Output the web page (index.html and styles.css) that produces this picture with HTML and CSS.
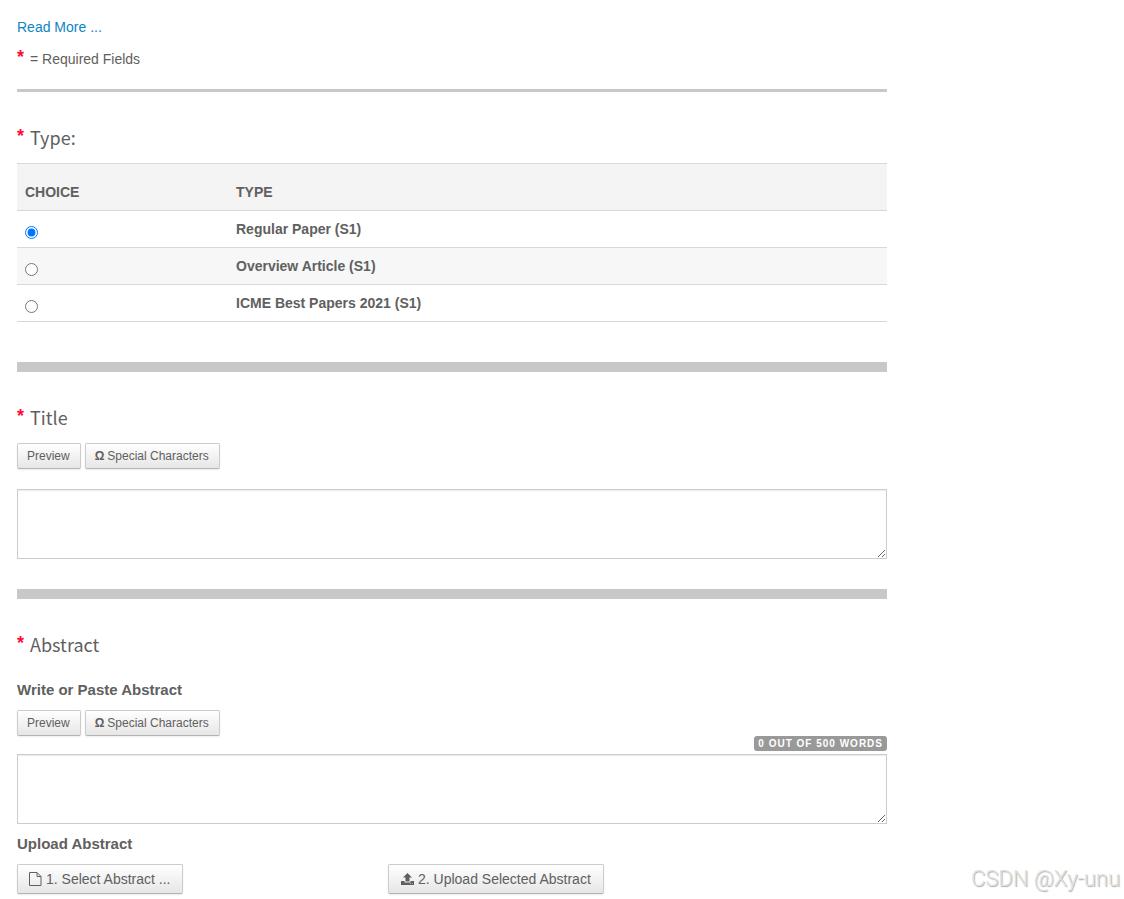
FILE: index.html
```html
<!DOCTYPE html>
<html lang="en">
<head>
<meta charset="utf-8">
<title>Type, Title, and Abstract</title>
<link rel="stylesheet" href="styles.css">
</head>
<body>
<main class="page">
  <form class="form">
    <div class="intro"><a href="#more">Read More ...</a></div>
    <div class="required"><span class="star">*</span><span>= Required Fields</span></div>
    <hr class="rule rule-thin">

    <section class="section">
      <h2 class="heading" id="type-heading"><span class="star">*</span><span>Type:</span></h2>
      <table class="choices" aria-labelledby="type-heading">
        <thead>
          <tr><th class="col-choice" scope="col">CHOICE</th><th scope="col">TYPE</th></tr>
        </thead>
        <tbody>
          <tr><td><input class="radio" type="radio" name="type" id="type-regular" checked></td><td><label for="type-regular">Regular Paper (S1)</label></td></tr>
          <tr><td><input class="radio" type="radio" name="type" id="type-overview"></td><td><label for="type-overview">Overview Article (S1)</label></td></tr>
          <tr><td><input class="radio" type="radio" name="type" id="type-icme"></td><td><label for="type-icme">ICME Best Papers 2021 (S1)</label></td></tr>
        </tbody>
      </table>
    </section>
    <hr class="rule rule-after-table">

    <section class="section">
      <h2 class="heading"><span class="star">*</span><label for="title">Title</label></h2>
      <div class="toolbar">
        <button class="btn btn-small" type="button">Preview</button>
        <button class="btn btn-small" type="button"><b>Ω</b> Special Characters</button>
      </div>
      <textarea class="area area-title" id="title"></textarea>
    </section>
    <hr class="rule">

    <section class="section">
      <h2 class="heading heading-abstract"><span class="star">*</span><span>Abstract</span></h2>
      <h3 class="subheading"><label for="abstract">Write or Paste Abstract</label></h3>
      <div class="toolbar">
        <button class="btn btn-small" type="button">Preview</button>
        <button class="btn btn-small" type="button"><b>Ω</b> Special Characters</button>
      </div>
      <div class="counter"><span class="badge">0 OUT OF 500 WORDS</span></div>
      <textarea class="area" id="abstract"></textarea>
      <h3 class="subheading subheading-upload">Upload Abstract</h3>
      <div class="uploads">
        <div>
          <button class="btn btn-select" type="button">
            <svg class="icon" width="13" height="14" viewBox="0 0 13 14" aria-hidden="true"><path d="M.5 .5h7.500l4 4v9H.5V.5zM8 .5v4h4" fill="none" stroke="currentColor"/></svg>
            <span>1. Select Abstract ...</span>
          </button>
        </div>
        <div>
          <button class="btn" type="button">
            <svg class="icon" width="13" height="14" viewBox="0 0 13 14" aria-hidden="true"><path d="M6.500 1 11 5.500H8.500V9.500h-4v-4H2zM0 9h3.500v1.500h6V9H13v4H0z" fill="currentColor"/><path d="M9 11.500h1M11 11.500h1" stroke="#aaa"/></svg>
            <span>2. Upload Selected Abstract</span>
          </button>
        </div>
      </div>
    </section>
  </form>
  <div class="watermark">CSDN @Xy-unu</div>
</main>
</body>
</html>
```
FILE: styles.css
```css
* {
  box-sizing: border-box;
}

body {
  margin: 0;
  background: #fff;
  color: #606060;
  font: 14px/20px "Liberation Sans", Arial, sans-serif;
}

.page {
  display: flex;
  justify-content: space-between;
  align-items: flex-end;
  padding: 17px 4px 5px 17px;
}

.form {
  flex: 0 1 870px;
  min-width: 0;
}

a {
  color: #0e84c0;
  text-decoration: none;
}

.required {
  display: flex;
  gap: 6px;
  margin-top: 12px;
}

.star {
  width: 7px;
  color: #ff0a32;
  font: bold 18px/16px "Liberation Sans", Arial, sans-serif;
}

.rule {
  height: 10px;
  margin: 30px 0 0;
  border: 0;
  background: #c8c8c8;
}

.rule-thin {
  height: 3px;
  margin-top: 20px;
}

.rule-after-table {
  margin-top: 40px;
}

.section {
  padding-top: 36px;
}

.heading {
  display: flex;
  gap: 6px;
  margin: 0 0 17px;
  font: normal 18px/18px "Noto Sans CJK SC", "Open Sans", sans-serif;
}

.heading-abstract {
  margin-bottom: 27px;
}

.subheading {
  margin: 0 0 10px;
  font-size: 15px;
  line-height: 20px;
}

.subheading-upload {
  margin-top: 10px;
}

.choices {
  width: 100%;
  border-collapse: collapse;
  font-weight: bold;
}

.choices th,
.choices td {
  padding: 8px;
  border-top: 1px solid #d8d8d8;
  border-bottom: 1px solid #d8d8d8;
  text-align: left;
  vertical-align: top;
}

.choices th {
  padding-top: 18px;
  background: #f4f4f4;
}

.choices tbody tr:nth-child(even) {
  background: #f7f7f7;
}

.col-choice {
  width: 211px;
}

.radio {
  display: block;
  width: 13px;
  height: 13px;
  margin: 7px 0 0;
}

.toolbar {
  display: flex;
  gap: 4px;
}

.btn {
  display: inline-flex;
  align-items: center;
  gap: 4px;
  height: 30px;
  padding: 0 12px;
  border: 1px solid #ccc;
  border-bottom-color: #b3b3b3;
  border-radius: 2px;
  background: linear-gradient(#fff, #e6e6e6);
  box-shadow: 0 1px 2px rgba(0, 0, 0, 0.08);
  color: #606060;
  font: 14px/20px "Liberation Sans", Arial, sans-serif;
  white-space: nowrap;
}

.btn-select {
  padding: 0 11px;
}

.btn-small {
  gap: 3px;
  height: 26px;
  padding: 0 10px 0 9px;
  font-size: 12px;
}

.icon {
  flex: none;
}

.area {
  display: block;
  width: 100%;
  height: 70px;
  border: 1px solid #ccc;
  box-shadow: inset 0 1px 1px rgba(0, 0, 0, 0.08);
  font: inherit;
}

.area-title {
  margin-top: 20px;
}

.counter {
  display: flex;
  justify-content: flex-end;
  margin-bottom: 3px;
}

.badge {
  padding: 0 4px;
  border-radius: 3px;
  background: #999;
  color: #fff;
  font-size: 10px;
  font-weight: bold;
  line-height: 15px;
  letter-spacing: 1px;
}

.uploads {
  display: grid;
  grid-template-columns: 371px auto;
}

.uploads > div {
  display: flex;
}

.watermark {
  color: #e2e2e2;
  font: 300 22px/30px Roboto, sans-serif;
  text-shadow: 1px 1px 1px #aaa;
  white-space: nowrap;
}
```
